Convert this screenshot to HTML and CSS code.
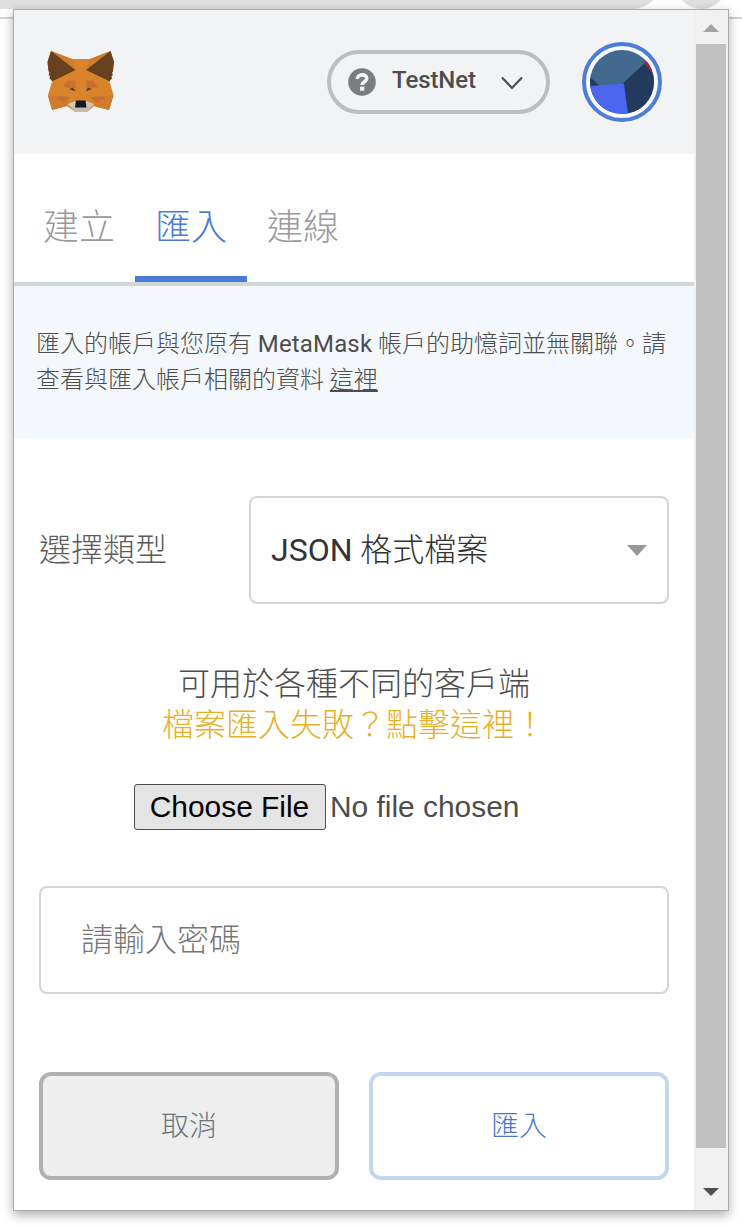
FILE: index.html
```html
<!DOCTYPE html>
<html lang="zh-Hant">
<head>
<meta charset="utf-8">
<title>MetaMask</title>
<link rel="stylesheet" href="styles.css">
</head>
<body>
<div class="browser-bar"><span class="omnibox"></span><span class="browser-dot"></span></div>
<main class="popup">
  <div class="content">
    <header class="header">
      <svg class="fox" viewBox="47 51 67 62">
        <path fill="#d8842a" d="M51 51 72 59H90L110.500 51 114 62 112.500 72 109.500 81.500 113.500 95 109 110 94 106 87 112H75L67 106 52 110 48 95 52 81.500 49 72 47.500 62Z"/>
        <path fill="#cf7b2b" d="M48 96H65L69 101 67 106 52 110ZM113.500 96H97L93 101 94 106 109 110Z"/>
        <path fill="#ce7b2c" d="M51 51 72 59 75 70ZM110.500 51 90 59 86 70Z"/>
        <path fill="#67401d" d="M51 51 75.500 70 52.500 81.300 49.500 78.500 50 76 48.500 75 49.500 73 48.500 71 47.500 62ZM110.500 51 86 70 109.500 81.300 112 78.500 111.500 76 113 75 112 73 113 71 114 62Z"/>
        <path fill="#ca712c" d="M63 86.500 68 80.500H75.500V92L69 88ZM98 86.500 93 80.500H86V92L92 88Z"/>
        <path fill="#c87032" d="M56 97 67 96.500 70 98 64 103ZM106 97 94 96.500 91 98 97 103Z"/>
        <path fill="#c7bbae" d="M67.500 104 74 101.500H88L94 104 87 112H75Z"/>
        <path fill="#d4c5b4" d="M68 104.500 75 101V108ZM93.500 104.500 86.500 101V108Z"/>
        <path fill="#17181e" d="M76 100.500H85.500L86.500 107.500H75Z"/>
        <path fill="#493c2b" d="M69 89 73 87.700 75 91.300ZM92 89 88 87.700 86 91.300Z"/>
      </svg>
      <div class="network">
        <svg class="help" viewBox="0 0 28 28"><circle cx="14" cy="14" r="13.800"/><path class="mark" d="M9.300 11C9.500 5.600 18.700 5.600 18.700 10.600 18.700 13.800 14.200 13.600 14.200 17"/><path class="dot" d="M12.100 18.600h4.200v4.200h-4.200z"/></svg>
        <span class="network-name">TestNet</span>
        <svg class="chevron" viewBox="0 0 22 14"><path d="M1 1.500 11 12 21 1.500"/></svg>
      </div>
      <div class="avatar">
        <svg viewBox="0 0 64 64"><defs><clipPath id="disc"><circle cx="32" cy="32" r="32"/></clipPath></defs><g clip-path="url(#disc)"><path fill="#41698d" d="M0 0H64V64H0Z"/><path fill="#233a5d" d="M0 27 12 38H0ZM33 33 64 5V64H33Z"/><path fill="#4b66ef" d="M0 36 34 33.500 38 64H0Z"/><path fill="#b3182b" d="M54 13 59 7 68 30 62 23Z"/></g></svg>
      </div>
    </header>
    <nav class="tabs"><a class="tab">建立</a><a class="tab active">匯入</a><a class="tab">連線</a></nav>
    <section class="notice">
      <div>匯入的帳戶與您原有 <span class="latin">MetaMask</span> 帳戶的助憶詞並無關聯。請</div>
      <div>查看與匯入帳戶相關的資料 <a class="link">這裡</a></div>
    </section>
    <section class="form">
      <div class="type-row">
        <span class="type-label">選擇類型</span>
        <div class="select"><span class="value"><span class="latin">JSON</span> 格式檔案</span><svg class="caret" viewBox="0 0 20 11"><path d="M0 0H20L10 11Z"/></svg></div>
      </div>
      <div class="help-text"><div>可用於各種不同的客戶端</div><a class="warning">檔案匯入失敗？點擊這裡！</a></div>
      <div class="file"><button class="choose">Choose File</button><span>No file chosen</span></div>
      <input class="password" type="password" placeholder="請輸入密碼">
      <div class="actions"><button class="button cancel">取消</button><button class="button import">匯入</button></div>
    </section>
  </div>
  <aside class="scrollbar">
    <svg class="arrow up" viewBox="0 0 16 8"><path d="M0 8 8 0 16 8Z"/></svg>
    <div class="thumb"></div>
    <svg class="arrow down" viewBox="0 0 16 8"><path d="M0 0H16L8 8Z"/></svg>
  </aside>
</main>
</body>
</html>
```
FILE: styles.css
```css
* { box-sizing: border-box; }
body {
  margin: 0;
  height: 1228px;
  overflow: hidden;
  background: #fff;
  padding: 9px 0 0 13px;
  color: #4d4d4d;
  font-family: Roboto, "Noto Sans CJK TC", sans-serif;
  font-weight: 300;
}
svg { display: block; flex: none; }
.browser-bar {
  position: absolute;
  inset: 0 0 auto;
  height: 19px;
  border-bottom: 2px solid #d2d2d2;
  overflow: hidden;
}
.omnibox, .browser-dot { position: absolute; background: #dfdfdf; }
.omnibox { left: -40px; top: -51px; width: 702px; height: 60px; border-radius: 30px; }
.browser-dot { left: 676px; top: -42px; width: 51px; height: 51px; border-radius: 50%; }
.popup {
  position: relative;
  display: flex;
  width: 716px;
  height: 1202px;
  border: 1px solid #a9acac;
  background: #fff;
  box-shadow: 0 4px 10px rgba(0, 0, 0, .32);
}
.content { width: 680px; }
.header {
  display: flex;
  align-items: center;
  height: 144px;
  padding: 0 32px 0 33px;
  background: #f1f3f4;
}
.fox { width: 67px; height: 62px; }
.network {
  display: flex;
  align-items: center;
  width: 223px;
  height: 64px;
  margin-left: auto;
  padding-left: 17px;
  border: 4px solid #bbbdbf;
  border-radius: 32px;
}
.help { width: 28px; height: 28px; fill: #7b7c7d; }
.mark { fill: none; stroke: #f1f3f4; stroke-width: 3.6; }
.dot { fill: #f1f3f4; }
.network-name {
  width: 125px;
  padding: 0 0 4px 16px;
  font-size: 24px;
  font-weight: 500;
  line-height: 32px;
  letter-spacing: -.1px;
}
.chevron { width: 22px; height: 14px; margin-top: 2px; fill: none; stroke: #4d4d4d; stroke-width: 2.2; }
.avatar {
  width: 80px;
  height: 80px;
  margin-left: 32px;
  padding: 4px;
  border: 4px solid #4c7ed5;
  border-radius: 50%;
  background: #f7f9fb;
}
.avatar svg { width: 64px; height: 64px; }
.tabs {
  display: flex;
  height: 132px;
  padding-left: 9px;
  border-bottom: 4px solid #d2d6d9;
}
.tab {
  width: 112px;
  padding: 47px 20px 0;
  color: #9b9b9b;
  font-size: 36px;
  line-height: 54px;
}
.active { border-bottom: 6px solid #4a7bd7; color: #4a7bd7; }
.notice {
  height: 152px;
  padding: 40px 0 0 22px;
  background: #f4f8fc;
  font-size: 24px;
  line-height: 36px;
  white-space: nowrap;
}
.latin { font-weight: 400; }
.notice .latin { letter-spacing: .15px; }
.link { text-decoration: underline; }
.form { padding: 58px 25px 0; font-size: 32px; }
.type-row { display: flex; align-items: center; justify-content: space-between; }
.type-label { padding-bottom: 6px; color: #5b5b5b; }
.select {
  display: flex;
  align-items: center;
  justify-content: space-between;
  width: 420px;
  height: 108px;
  padding: 0 20px;
  border: 2px solid #d5d5d5;
  border-radius: 8px;
  color: #333;
}
.value { padding-bottom: 6px; }
.caret { width: 20px; height: 11px; fill: #999; }
.help-text { margin-top: 60px; line-height: 41px; text-align: center; }
.warning { color: #e6b029; }
.file {
  display: flex;
  align-items: center;
  gap: 4px;
  margin-top: 38px;
  padding-left: 95px;
  font: 400 29.900px "Liberation Sans", sans-serif;
}
.choose {
  width: 192px;
  height: 46px;
  padding: 0 1px 0 0;
  border: 1px solid #4d4d4d;
  border-radius: 3px;
  background: #e4e4e4;
  color: #000;
  font: inherit;
}
.password {
  display: block;
  width: 630px;
  height: 108px;
  margin-top: 56px;
  padding: 0 40px;
  border: 2px solid #d5d5d5;
  border-radius: 8px;
  font: inherit;
}
.password::placeholder { color: #777; }
.actions { display: flex; gap: 30px; margin-top: 78px; }
.button {
  width: 300px;
  height: 108px;
  padding: 0 0 4px;
  border: 4px solid;
  border-radius: 12px;
  font: inherit;
  font-size: 28px;
}
.cancel { border-color: #b0b0b0; background: #eee; color: #6a737d; }
.import { border-color: #c3d6ef; background: #fff; color: #4a76cc; }
.scrollbar {
  display: flex;
  flex-direction: column;
  align-items: center;
  width: 34px;
  padding: 14px 0 14px;
  background: #f1f1f1;
}
.arrow { width: 16px; height: 8px; }
.up { fill: #a3a3a3; }
.down { fill: #505050; margin-top: auto; }
.thumb { width: 30px; height: 1104px; margin-top: 12px; background: #c1c1c1; }
```
